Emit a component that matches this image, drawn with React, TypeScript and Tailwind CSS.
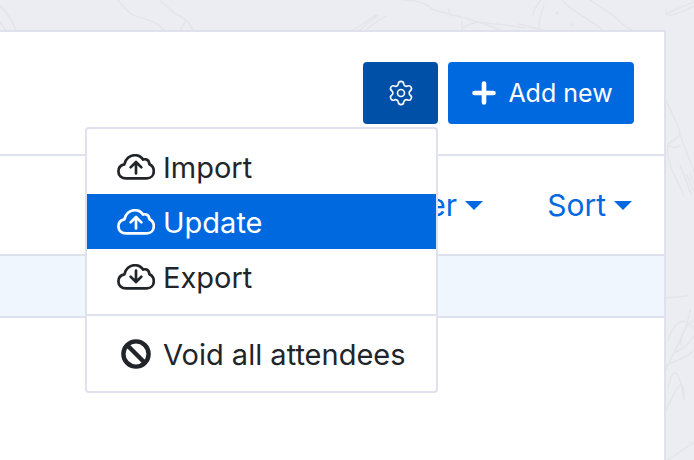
import { Settings } from 'lucide-react'

function CloudIcon({ dir }: { dir: 'up' | 'down' }) {
  return (
    <svg width="38" height="26" viewBox="0 0 38 26" fill="none" stroke="currentColor" strokeWidth="2.7" strokeLinecap="round" strokeLinejoin="round" className="shrink-0">
      <path d="M9 24.4C4.6 24.4 1.4 21.4 1.4 17.4C1.4 14 3.6 11.2 7.4 10.4C8.2 5 12.8 1.2 18 1.2C21.4 1.2 24.2 2.8 26.2 5.6C27.2 5.2 28.2 5.2 29 5.4C31.2 5.8 32.2 7.6 32.4 10.2C35.2 11.4 36.8 14 36.8 17.2C36.8 21.4 33.8 24.4 29.6 24.4Z" />
      {dir === 'up' ? (
        <path d="M19 19.5V8.4M13.6 13.4L19 8L24.4 13.4" />
      ) : (
        <path d="M19 6.5V17.6M13.6 12.6L19 18L24.4 12.6" />
      )}
    </svg>
  )
}

function BanIcon() {
  return (
    <svg width="30" height="30" viewBox="0 0 30 30" fill="none" stroke="currentColor" strokeWidth="4.4" className="shrink-0">
      <circle cx="15" cy="15" r="12.6" />
      <path d="M6 6L24 24" />
    </svg>
  )
}

function Caret() {
  return <span className="ml-2 inline-block h-0 w-0 border-x-[9px] border-t-[9px] border-x-transparent border-t-[#0069e0]" />
}

function Background() {
  return (
    <svg className="absolute inset-0" width="694" height="460" viewBox="0 0 694 460" fill="none" stroke="#e3e5eb" strokeWidth="1.5" strokeLinecap="round" strokeLinejoin="round">
      <path d="M0 5C6 12 13 20 16 31M0 22L6 31" />
      <path d="M118 0C124 7 130 15 136 16C148 19 158 23 164 30M160 0C167 7 173 13 178 15C183 18 186 20 186 20L180 31M186 20C189 23 192 27 193 31" />
      <path d="M353 30C362 25 368 20 376 15M360 30C366 24 374 19 378 15M366 30C372 24 380 20 386 16" />
      <path d="M404 0C420 1 426 3 432 9C440 13 470 17 500 30M461 30C463 26 474 23 476 22C490 23 505 25 525 28M462 30V22M448 8L451 16" />
      <path d="M541 0C536 5 533 12 533 16M544 6C540 14 538 25 540 31M562 0C570 10 590 20 603 30M590 0C600 8 612 12 620 22C624 26 628 28 632 30M519 24C528 26 535 28 545 31" />
      <circle cx="557" cy="13" r="1" />
      <circle cx="572" cy="25" r="1" />
      <path d="M694 2L670 12C665 14 665 15 668 14M666 10C665 12 666 14 669 15C674 16 684 11 694 6" />
      <path d="M666 100C672 115 680 125 680 135C676 140 668 142 668 145C667 150 668 160 672 170L684 196M680 135C684 145 688 155 694 172M668 145C672 148 676 148 680 146M680 165C682 170 686 180 690 192M684 175L692 195M687 175L694 192M690 174L694 184" />
      <path d="M666 298L688 296M666 370C672 354 688 330 690 310M668 340C675 320 686 315 694 330M676 352C684 348 690 344 694 336M681 345C680 335 686 325 694 320M666 365C680 360 690 355 694 350M666 410C676 390 684 370 684 400C684 395 676 350 668 388M694 442L668 460" />
    </svg>
  )
}

export default function App() {
  return (
    <div className="relative h-[460px] w-[694px] overflow-hidden bg-[#ecedf2] text-[#212529] font-['Inter',sans-serif]">
      <Background />
      <div className="relative mt-[30px] h-[430px] w-[666px] border-r-2 border-t-2 border-[#dfe2ee] bg-white">
        <div className="flex h-[122px] items-start justify-end gap-[10px] pr-[30px] pt-[30px]">
          <button className="flex h-[62px] w-[75px] items-center justify-center rounded-[4px] bg-[#0050a8] text-white">
            <Settings size={28} strokeWidth={1.35} />
          </button>
          <button className="flex h-[62px] w-[186px] items-center justify-center gap-[12px] rounded-[4px] bg-[#0069e0] pl-[3px] text-[25px] text-white">
            <svg width="24" height="24" viewBox="0 0 24 24" fill="none" stroke="currentColor" strokeWidth="4.6" strokeLinecap="round">
              <path d="M12 2.5V21.5M2.5 12H21.5" />
            </svg>
            <span className="mt-[2px]">Add new</span>
          </button>
        </div>
        <div className="flex h-[100px] items-center justify-end gap-[64px] border-t-2 border-[#dfe2ee] pr-[32px] text-[30px] text-[#0069e0]">
          <span className="flex items-center">Filter<Caret /></span>
          <span className="flex items-center">Sort<Caret /></span>
        </div>
        <div className="h-[64px] border-y-2 border-[#dfe2ee] bg-[#eff6fe]" />
      </div>

      <div className="absolute left-[85px] top-[127px] w-[353px] rounded-[4px] border-2 border-[#dfe2ee] bg-white py-[10px] text-[29px]">
        <div className="flex h-[55px] items-center gap-[8px] pl-[30px]"><CloudIcon dir="up" /><span className="mt-[2px]">Import</span></div>
        <div className="flex h-[55px] items-center gap-[8px] bg-[#0069e0] pl-[30px] text-white"><CloudIcon dir="up" /><span className="mt-[2px]">Update</span></div>
        <div className="flex h-[55px] items-center gap-[8px] pl-[30px]"><CloudIcon dir="down" /><span className="mt-[2px]">Export</span></div>
        <div className="my-[10px] h-[2px] bg-[#dfe2ee]" />
        <div className="flex h-[55px] items-center gap-[12px] pl-[34px]"><BanIcon /><span className="mt-[2px]">Void all attendees</span></div>
      </div>
    </div>
  )
}
